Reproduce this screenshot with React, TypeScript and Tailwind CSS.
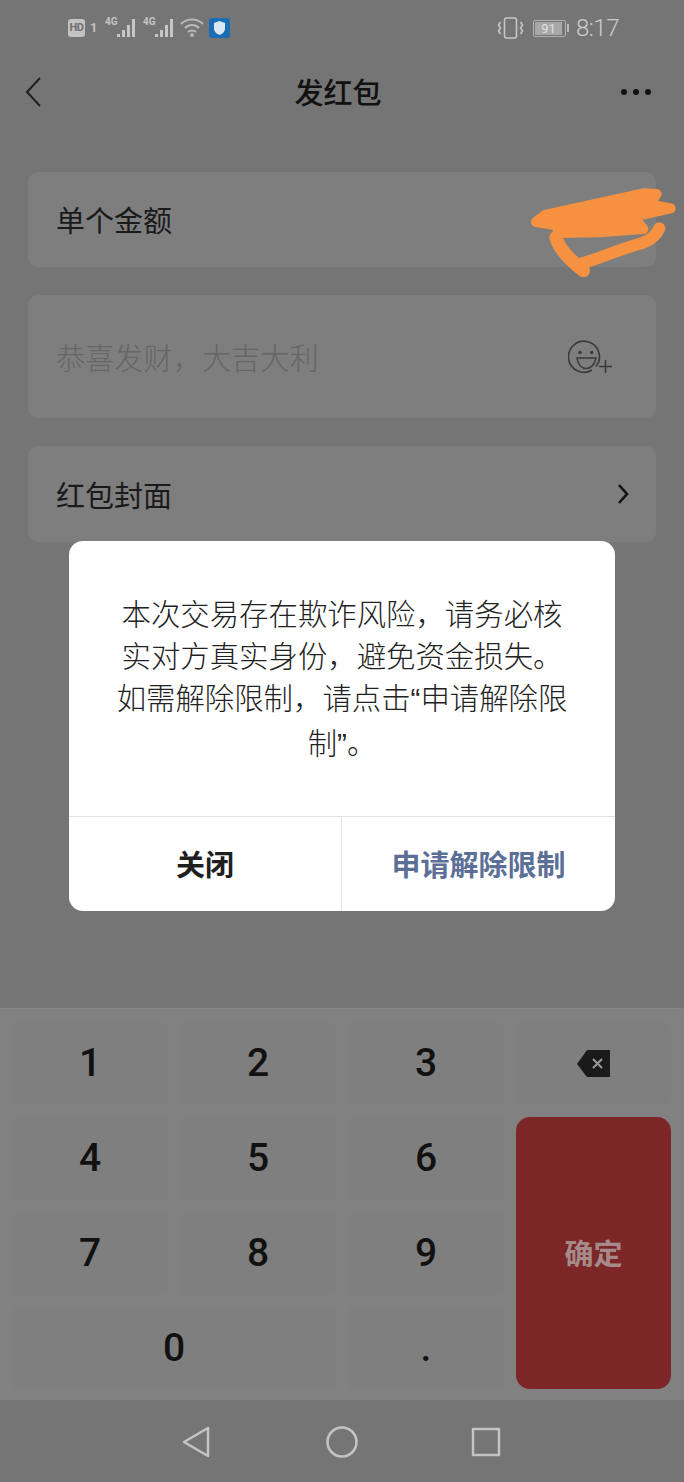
const cjk = "font-['Noto_Sans_CJK_SC','Noto_Sans',sans-serif]";

function Cell({ children, className = '' }: { children?: React.ReactNode; className?: string }) {
  return (
    <div className={`flex items-center justify-center rounded-lg bg-[#7f7f7f] text-[39px] font-medium text-[#111111] font-['Roboto',sans-serif] ${className}`}>
      {children}
    </div>
  );
}

function Quote({ children }: { children: React.ReactNode }) {
  return <span className="font-['Liberation_Sans',sans-serif]">{children}</span>;
}

function SignalIcon() {
  return (
    <div className="relative h-[20px] w-[32px]">
      <span className="absolute left-0 top-[-1px] text-[10px] font-bold leading-[10px] text-[#c4c4c4] font-['Roboto',sans-serif]">4G</span>
      <svg className="absolute left-0 top-0" width="32" height="20" viewBox="0 0 32 20" fill="#c6c6c6">
        <rect x="12" y="16" width="3" height="3" />
        <rect x="17" y="12" width="3" height="7" />
        <rect x="22" y="7" width="3" height="12" />
        <rect x="27" y="1" width="3" height="18" />
      </svg>
    </div>
  );
}

function StatusBar() {
  return (
    <div className="flex h-[55px] items-center pl-[68px] pr-[65px] pt-[1px]">
      <div className="flex h-[18px] w-[17px] items-center justify-center rounded-[3px] bg-[#c2c2c2] text-[11px] font-bold tracking-[-0.5px] text-[#6f6f6f] font-['Roboto',sans-serif]">HD</div>
      <span className="ml-[5px] w-[8px] text-[13px] font-bold text-[#c2c2c2] font-['Roboto',sans-serif]">1</span>
      <div className="ml-[7px] flex gap-[6px]">
        <SignalIcon />
        <SignalIcon />
      </div>
      <svg className="ml-[5px]" width="24" height="20" viewBox="0 0 24 20" fill="none" stroke="#b8b8b8" strokeWidth="2">
        <path d="M1 6 C7 0 17 0 23 6" />
        <path d="M5 10 C9 6 15 6 19 10" />
        <path d="M8 14 C10 12 14 12 16 14" />
        <circle cx="12" cy="17" r="1" fill="#b8b8b8" />
      </svg>
      <svg className="ml-[5px]" width="21" height="20" viewBox="0 0 21 20">
        <rect width="21" height="20" rx="3" fill="#1a6db5" />
        <path d="M10.5 3 L16 5 V10 C16 14 13 16 10.5 17 C8 16 5 14 5 10 V5 Z" fill="#dbe8f2" />
      </svg>
      <div className="ml-auto flex items-center">
        <svg width="27" height="22" viewBox="0 0 27 22" fill="none" stroke="#c6c6c6" strokeWidth="1.6">
          <rect x="7.5" y="1" width="12" height="20" rx="2" />
          <path d="M3.5 5 L1.5 8 L3.5 11 L1.5 14 L3.5 17" />
          <path d="M23.5 5 L25.5 8 L23.5 11 L25.5 14 L23.5 17" />
        </svg>
        <div className="ml-[9px] flex items-center">
          <div className="flex h-[17px] w-[33px] items-center rounded-[2px] border border-[#b0b0b0] p-[1px]">
            <div className="flex h-full w-[27px] items-center justify-center bg-[#a8a8a8] text-[13px] leading-none text-[#e0e0e0] font-['Roboto',sans-serif]">91</div>
          </div>
          <div className="ml-[1px] h-[8px] w-[2px] bg-[#b8b8b8]" />
        </div>
        <span className="ml-[7px] text-[24px] font-light leading-none tracking-[-0.5px] text-[#cccccc] font-['Roboto',sans-serif]">8:17</span>
      </div>
    </div>
  );
}

function Header() {
  return (
    <div className="flex h-[74px] items-center justify-between pl-[25px] pr-[33px]">
      <svg width="16" height="30" viewBox="0 0 16 30" fill="none" stroke="#1f1f1f" strokeWidth="2">
        <path d="M15 1 L2 15 L15 29" />
      </svg>
      <span className={`mb-[2px] ml-[14px] text-[29px] font-medium leading-none text-[#111111] ${cjk}`}>发红包</span>
      <div className="flex gap-[6px]">
        <span className="h-[6px] w-[6px] rounded-full bg-[#111111]" />
        <span className="h-[6px] w-[6px] rounded-full bg-[#111111]" />
        <span className="h-[6px] w-[6px] rounded-full bg-[#111111]" />
      </div>
    </div>
  );
}

// orange scribble someone drew over the amount
function Scribble() {
  return (
    <svg className="absolute left-[500px] top-[160px]" width="184" height="230" viewBox="0 0 552 690" fill="none" stroke="#f59140" strokeLinecap="round" strokeLinejoin="round">
      <path
        d="M108 186 L135 165 L430 100 L470 102 L450 133 L512 145 L400 170 L430 207 L300 217 L175 219 L170 196 Z"
        fill="#f59140"
        strokeWidth="30"
      />
      <path d="M168 232 C175 265 210 300 250 332" strokeWidth="40" />
      <path d="M240 312 C300 295 350 270 430 248 C455 238 470 225 478 205" strokeWidth="36" />
    </svg>
  );
}

function Modal() {
  return (
    <div className={`absolute left-[69px] top-[541px] w-[546px] overflow-hidden rounded-[14px] bg-white ${cjk}`}>
      <div className="flex h-[275px] flex-col items-center justify-center pb-[2px] text-[29.4px] font-light leading-[42px] text-[#222222]">
        <p className="whitespace-nowrap">本次交易存在欺诈风险，请务必核</p>
        <p className="whitespace-nowrap">实对方真实身份，避免资金损失。</p>
        <p className="whitespace-nowrap">如需解除限制，请点击<Quote>“</Quote>申请解除限</p>
        <p className="whitespace-nowrap">制<Quote>”</Quote>。</p>
      </div>
      <div className="flex h-[95px] border-t border-[#e2e2e2] text-[29px] font-bold">
        <div className="flex w-[273px] items-center justify-center border-r border-[#e2e2e2] text-[#1f1f1f]">关闭</div>
        <div className="flex flex-1 items-center justify-center text-[#5c6f96]">申请解除限制</div>
      </div>
    </div>
  );
}

function Keypad() {
  return (
    <div className="mt-auto grid grid-cols-[156px_156px_156px_155px] grid-rows-[83px_83px_83px_83px] gap-3 border-t border-[#868686] bg-[#818181] pb-[10px] pl-3 pt-[13px]">
      <Cell>1</Cell>
      <Cell>2</Cell>
      <Cell>3</Cell>
      <Cell>
        <svg width="35" height="28" viewBox="0 0 35 28">
          <path d="M11 0 H34 V27 H11 L1 14 Z" fill="#1a1a1a" />
          <path d="M17 9 L26 18 M26 9 L17 18" stroke="#9a9a9a" strokeWidth="2" />
        </svg>
      </Cell>
      <Cell>4</Cell>
      <Cell>5</Cell>
      <Cell>6</Cell>
      <div className={`row-span-3 mb-[1px] flex items-center justify-center rounded-[14px] bg-[#7d2628] text-[29px] font-bold text-[#a68a8a] ${cjk}`}>确定</div>
      <Cell>7</Cell>
      <Cell>8</Cell>
      <Cell>9</Cell>
      <Cell className="col-span-2">0</Cell>
      <Cell>.</Cell>
    </div>
  );
}

function NavBar() {
  return (
    <div className="flex h-[82px] items-center bg-[#757575] pl-[182px] pt-[2px]">
      <svg width="28" height="32" viewBox="0 0 28 32" fill="none" stroke="#c4c4c4" strokeWidth="2.5" strokeLinejoin="round">
        <path d="M26 2 V30 L2 16 Z" />
      </svg>
      <svg className="ml-[116px]" width="32" height="32" viewBox="0 0 32 32" fill="none" stroke="#c4c4c4" strokeWidth="2.5">
        <circle cx="16" cy="16" r="14.5" />
      </svg>
      <svg className="ml-[113px]" width="30" height="30" viewBox="0 0 30 30" fill="none" stroke="#c4c4c4" strokeWidth="2.5" strokeLinejoin="round">
        <rect x="2" y="2" width="26" height="26" />
      </svg>
    </div>
  );
}

export default function App() {
  return (
    <div className="relative flex h-[1482px] w-[684px] flex-col overflow-hidden bg-[#757575]">
      <StatusBar />
      <Header />
      <div className={`flex flex-col gap-[28px] px-[28px] pt-[43px] text-[29px] leading-none text-[#1a1a1a] ${cjk}`}>
        <div className="flex h-[95px] items-center rounded-[10px] bg-[#7e7e7e] px-[28px]">单个金额</div>
        <div className="flex h-[123px] items-center justify-between rounded-[10px] bg-[#7e7e7e] pl-[28px] pr-[44px]">
          <span className="text-[29.2px] font-light text-[#666666]">恭喜发财，大吉大利</span>
          <svg width="44" height="36" viewBox="0 0 44 36" fill="none" stroke="#3a3a3a" strokeWidth="1.6">
            <path d="M28 27.5 A15.5 15.5 0 1 0 24 31" />
            <circle cx="12" cy="13.5" r="1.7" fill="#3a3a3a" stroke="none" />
            <circle cx="23.7" cy="13.5" r="1.7" fill="#3a3a3a" stroke="none" />
            <path d="M9 19 H28 C27 26 22 29.5 18.5 29.5 C14 29.5 10 26 9 19 Z" />
            <path d="M31 27.5 H44 M37.5 21 V34" />
          </svg>
        </div>
        <div className="flex h-[96px] items-center justify-between rounded-[10px] bg-[#7e7e7e] pl-[28px] pr-[27px]">
          <span>红包封面</span>
          <svg width="12" height="22" viewBox="0 0 12 22" fill="none" stroke="#111111" strokeWidth="2.6">
            <path d="M2 2 L10 11 L2 20" />
          </svg>
        </div>
      </div>
      <Keypad />
      <NavBar />
      <Scribble />
      <Modal />
    </div>
  );
}
